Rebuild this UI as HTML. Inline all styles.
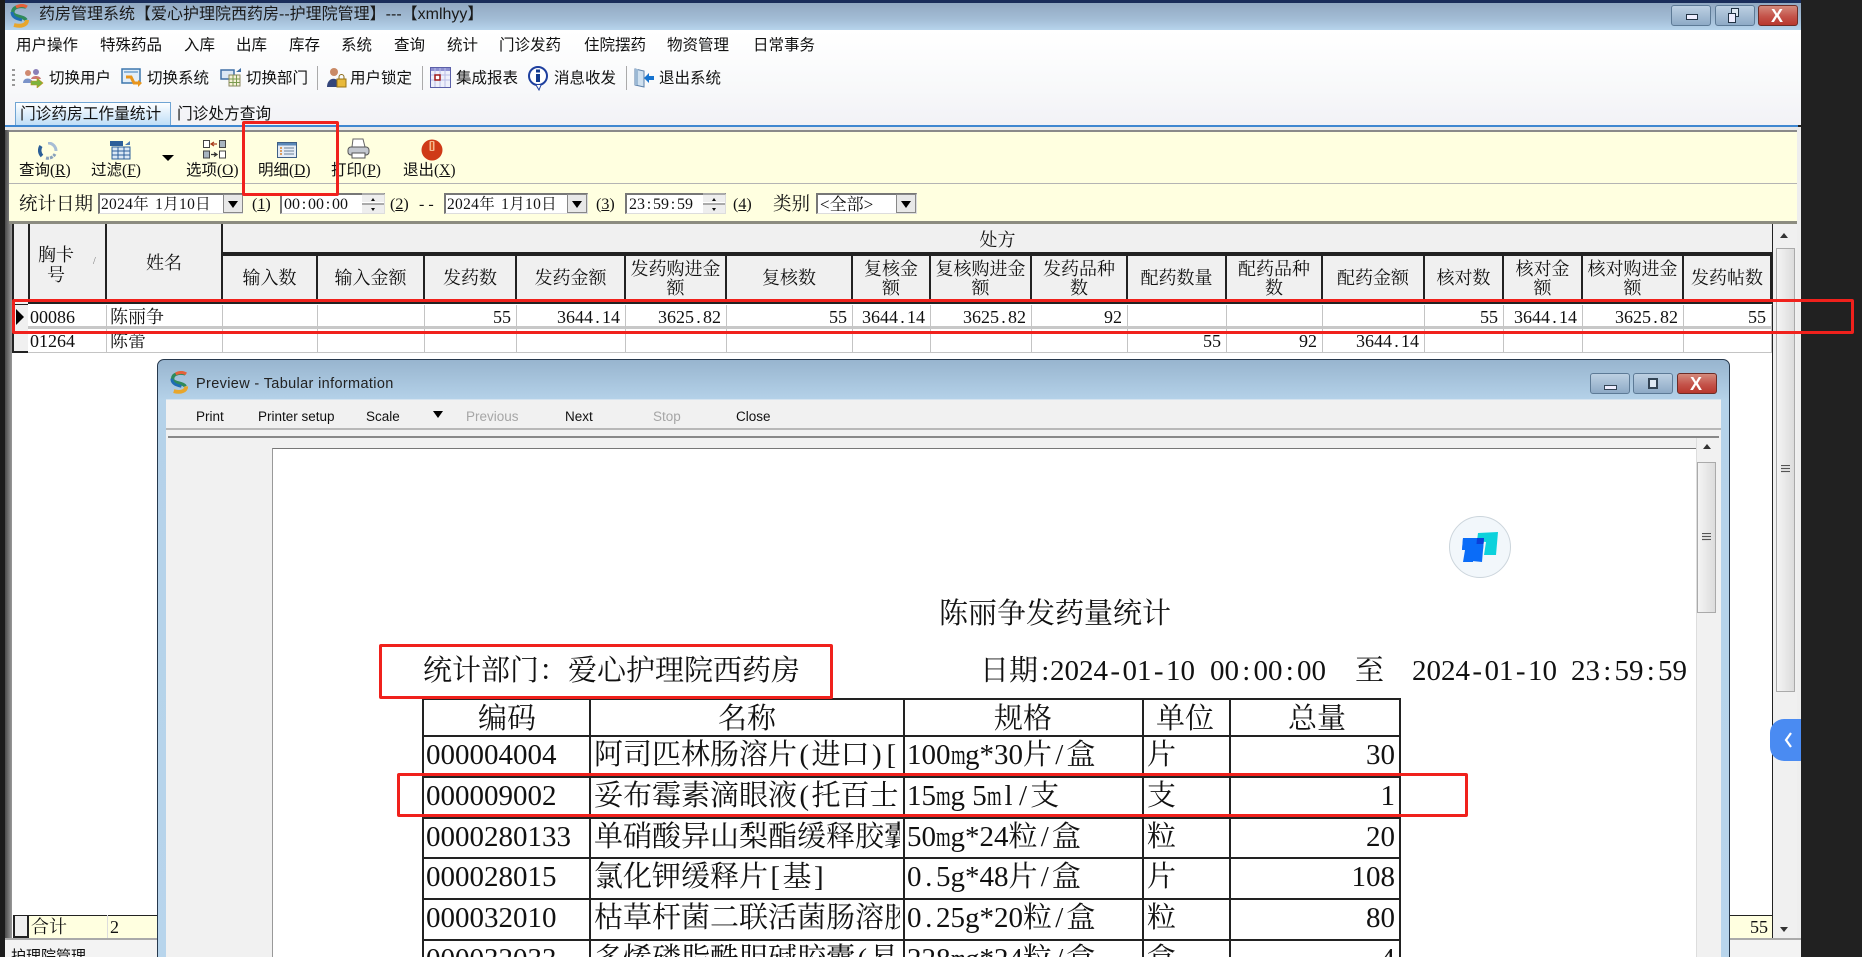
<!DOCTYPE html>
<html lang="zh-CN"><head><meta charset="utf-8"><title>药房管理系统</title>
<style>
*{box-sizing:border-box}
html,body{margin:0;padding:0;background:#212121}
#p{position:relative;width:1862px;height:957px;overflow:hidden;background:#212121;font-family:"Liberation Sans","Noto Sans CJK SC",sans-serif;color:#111;filter:blur(.3px)}
#p div,#p svg{position:absolute}
.t{white-space:nowrap;line-height:20px}
.m{font-size:15.5px;top:36px}
.b{font-size:15.5px;top:69px}
.l{font-size:15.5px;top:161px;font-family:"Liberation Serif","Noto Sans CJK SC",serif}
.d{font-size:16px;top:195px;font-family:"Liberation Serif","Noto Serif CJK SC",serif}
.gr{font-family:"Liberation Serif","Noto Serif CJK SC",serif;font-size:18px}
.h{top:254px;height:50px;background:#f0f0f0;border-right:2px solid #222;border-top:2px solid #222;border-bottom:3px solid #222;text-align:center;line-height:19px;overflow:hidden;display:flex;align-items:center;justify-content:center;white-space:nowrap;padding:0 1px}
.c{height:24px;border-right:1px solid #c4c4c4;border-bottom:1px solid #c4c4c4;text-align:right;padding-right:5px;line-height:24px;white-space:nowrap;overflow:hidden;background:#fff}
.r1{top:305px;border-bottom:3px solid #c8c8c8}
.r2{top:329px}
.rp{font-family:"Liberation Serif","Noto Serif CJK SC",serif;font-size:29px;line-height:36px;white-space:nowrap;color:#111}
.cell{overflow:hidden;white-space:nowrap}
.w{display:inline-block;width:14.5px;text-align:center}
.n{display:inline-block;width:14.5px;transform:scaleX(.65);transform-origin:left}
.p{display:inline-block;width:9px;text-align:center}
.q{display:inline-block;width:8px;text-align:center}
.red{border:3px solid #f0211c;border-radius:2px}
.win{width:40px;height:21px;border:1px solid #5d7a96;border-radius:3px;background:linear-gradient(#bdd0e2,#8eaac6)}
.sb{background:linear-gradient(90deg,#f4f4f4,#dcdcdc);border:1px solid #aaa}
.cb{background:#fff;border-top:2px solid #777;border-left:2px solid #777;border-right:1px solid #ddd;border-bottom:1px solid #ddd;height:21px;top:193px}
.dd{top:194px;height:19px;width:20px;background:#e8e8e8;border:1px solid #888}
.tri{width:0;height:0;border-left:5px solid transparent;border-right:5px solid transparent;border-top:7px solid #000}
.sp{width:22px;height:9px;background:#eee;border-top:2px solid #aaa}
.up,.dn{width:0;height:0;border-left:2px solid transparent;border-right:2px solid transparent}
.up{border-bottom:3px solid #111}.dn{border-top:3px solid #111}
</style></head><body><div id="p">

<!-- main window -->
<div style="left:0;top:0;width:1801px;height:3px;background:#1a2d5a"></div>
<div style="left:0;top:0;width:5px;height:957px;background:#1c1c1c"></div>
<div style="left:5px;top:30px;width:7px;height:927px;background:linear-gradient(90deg,#4a4a4a,#9a9a9a)"></div>
<div style="left:5px;top:3px;width:1796px;height:27px;background:linear-gradient(#92a9c2,#a3bdd6 60%,#b7d4ec)"></div>
<svg style="left:8px;top:4px" width="24" height="24" viewBox="0 0 24 24"><path d="M18 3C10 1 4 4 5 9c1 4 11 3 13 7" fill="none" stroke="#2f8a5a" stroke-width="3.5"/><path d="M6 21c7 2 13 0 13-5" fill="none" stroke="#e8a62c" stroke-width="4"/><path d="M4 8c0 6 6 7 10 8" fill="none" stroke="#1f6db4" stroke-width="3"/><path d="M8 3c4-2 8-2 11 0" fill="none" stroke="#e5613a" stroke-width="3"/></svg>
<div class="t" style="left:39px;top:5px;font-size:16px;color:#1a1a1a">药房管理系统【爱心护理院西药房--护理院管理】---【xmlhyy】</div>
<div class="win" style="left:1671px;top:5px"><div style="left:14px;top:8px;width:12px;height:6px;background:#eef;border:1px solid #234"></div></div>
<div class="win" style="left:1715px;top:5px"><div style="left:15px;top:2px;width:8px;height:9px;background:#dfe9f3;border:1px solid #234"></div><div style="left:12px;top:7px;width:8px;height:10px;background:#eef;border:1px solid #234"></div></div>
<div class="win" style="left:1758px;top:5px;background:linear-gradient(#d48a7c,#c4534a 55%,#b8382e);border-color:#6d2c26"><div class="t" style="left:12px;top:0;font-size:18px;font-weight:bold;color:#fff">X</div></div>

<div style="left:5px;top:30px;width:1796px;height:95px;background:linear-gradient(#fff,#f9fafb 50%,#f2f2f6)"></div>
<div class="t m" style="left:16px">用户操作</div><div class="t m" style="left:100px">特殊药品</div><div class="t m" style="left:184px">入库</div><div class="t m" style="left:236px">出库</div><div class="t m" style="left:289px">库存</div><div class="t m" style="left:341px">系统</div><div class="t m" style="left:394px">查询</div><div class="t m" style="left:447px">统计</div><div class="t m" style="left:499px">门诊发药</div><div class="t m" style="left:584px">住院摆药</div><div class="t m" style="left:667px">物资管理</div><div class="t m" style="left:753px">日常事务</div>

<div style="left:12px;top:69px;width:3px;height:19px;background:repeating-linear-gradient(#999 0 2px,transparent 2px 5px)"></div>
<svg style="left:22px;top:68px" width="22" height="20" viewBox="0 0 22 20"><circle cx="6" cy="5" r="3" fill="#d08a70"/><circle cx="14" cy="4" r="3" fill="#8a7fb8"/><path d="M1 15c0-6 9-6 10 0z" fill="#7a93c9"/><path d="M9 11c1-4 9-4 10 0z" fill="#c77"/><path d="M9 13h6v-3l6 5-6 5v-3H9z" fill="#7cb33d" stroke="#c8921c" stroke-width=".6"/></svg>
<div class="t b" style="left:49px">切换用户</div>
<svg style="left:121px;top:68px" width="22" height="20" viewBox="0 0 22 20"><rect x="1" y="1" width="18" height="14" fill="#e3eef8" stroke="#3d77ad" stroke-width="1.5"/><rect x="3" y="3" width="14" height="2" fill="#8bb4d8"/><path d="M5 9h5l3 6h5" fill="none" stroke="#e8951c" stroke-width="3"/><path d="M17 12l4 3-4 4z" fill="#e8951c"/></svg>
<div class="t b" style="left:147px">切换系统</div>
<svg style="left:220px;top:67px" width="23" height="20" viewBox="0 0 23 20"><rect x="1" y="3" width="13" height="9" fill="#dbe7f4" stroke="#3f6fa5" stroke-width="1.5"/><rect x="9" y="8" width="11" height="11" fill="#f6f0d8" stroke="#8b8760"/><path d="M9 12h11M9 15.500h11M13 8v11M16.500 8v11" stroke="#7a9a50"/><path d="M16 5l5-4v4z" fill="#3f6fa5"/></svg>
<div class="t b" style="left:246px">切换部门</div>
<div style="left:317px;top:66px;width:1px;height:24px;background:#aaa"></div>
<svg style="left:326px;top:67px" width="22" height="22" viewBox="0 0 22 22"><circle cx="8" cy="5" r="4" fill="#c98a66"/><path d="M1 20c0-11 13-11 13 0z" fill="#33457a"/><path d="M13 12v-2a2.500 2.500 0 0 1 5 0v2" fill="none" stroke="#8a6a1a"/><rect x="11" y="12" width="9" height="8" fill="#e8b93a" stroke="#9a7414"/></svg>
<div class="t b" style="left:350px">用户锁定</div>
<div style="left:422px;top:66px;width:1px;height:24px;background:#aaa"></div>
<svg style="left:430px;top:67px" width="21" height="21" viewBox="0 0 21 21"><rect x=".5" y=".5" width="20" height="20" fill="#eef0fb" stroke="#5a5fa8"/><rect x="1" y="1" width="19" height="3" fill="#8c8fd0"/><path d="M5 1v19M10 1v19M15 1v19M1 8h19M1 13h19" stroke="#b9bde6"/><rect x="5" y="8" width="5" height="5" fill="#fff" stroke="#a01818" stroke-width="1.5"/></svg>
<div class="t b" style="left:456px">集成报表</div>
<svg style="left:527px;top:66px" width="22" height="25" viewBox="0 0 22 25"><circle cx="11" cy="10" r="9" fill="#fff" stroke="#1e3f9e" stroke-width="2"/><rect x="9" y="8" width="4" height="8" fill="#123a8e"/><rect x="9" y="3.500" width="4" height="3" fill="#123a8e"/><path d="M9 19l3 5 2-5" fill="#fff" stroke="#1e3f9e"/></svg>
<div class="t b" style="left:554px">消息收发</div>
<div style="left:626px;top:66px;width:1px;height:24px;background:#aaa"></div>
<svg style="left:633px;top:67px" width="22" height="22" viewBox="0 0 22 22"><path d="M2 2l9 2v16l-9-2z" fill="#cfe0ef" stroke="#5b7fa8"/><rect x="2" y="2" width="3" height="16" fill="#9bb8d4"/><path d="M11 11l5-5v3h5v4h-5v3z" fill="#1673cf"/></svg>
<div class="t b" style="left:659px">退出系统</div>

<!-- tabs -->
<div style="left:15px;top:102px;width:156px;height:24px;background:linear-gradient(#fdfeff,#bcdcf6);border:1px solid #6fa4d3;border-bottom:none"></div>
<div class="t" style="left:20px;top:105px;font-size:15.7px">门诊药房工作量统计</div>
<div class="t" style="left:177px;top:105px;font-size:15.7px">门诊处方查询</div>
<div style="left:5px;top:125px;width:1793px;height:2px;background:#3f87d0"></div>
<div style="left:5px;top:127px;width:1796px;height:3px;background:#e8e8e8"></div>
<div style="left:9px;top:130px;width:1789px;height:2px;background:#8a8a8a"></div>

<!-- yellow panel -->
<div style="left:9px;top:132px;width:1788px;height:51px;background:#ffffe0"></div>
<div style="left:9px;top:183px;width:1788px;height:1px;background:#b4b4b4"></div>
<div style="left:9px;top:184px;width:1788px;height:37px;background:#ffffe0"></div>
<div style="left:1797px;top:130px;width:4px;height:100px;background:#eee"></div>
<div style="left:9px;top:221px;width:1788px;height:3px;background:#8c8c80"></div>

<svg style="left:38px;top:142px" width="20" height="18" viewBox="0 0 20 18"><path d="M10 1a8 8 0 0 1 8 8" fill="none" stroke="#a7bdd4" stroke-width="3"/><path d="M3 4a8 8 0 0 0 1 10" fill="none" stroke="#2b5f98" stroke-width="3.500"/><path d="M8 16a8 8 0 0 0 9-4" fill="none" stroke="#8aa2bb" stroke-width="3" stroke-dasharray="3 1"/></svg>
<svg style="left:109px;top:140px" width="22" height="20" viewBox="0 0 22 20"><rect x="1" y="1" width="13" height="5" fill="#2d5f9a"/><path d="M16 5l5-4v4z" fill="#4d7cb3"/><rect x="3" y="7" width="18" height="12" fill="#dbe8f5" stroke="#2d5f9a"/><path d="M3 11h18M3 15h18M9 7v12M15 7v12" stroke="#2d5f9a"/></svg>
<svg style="left:203px;top:140px" width="23" height="19" viewBox="0 0 23 19"><rect x=".5" y=".5" width="6" height="7" fill="#fff" stroke="#444"/><rect x="16.500" y=".5" width="6" height="7" fill="#a8b4c0" stroke="#444"/><path d="M14 4H9M11 2l-3 2 3 2" fill="none" stroke="#a83a1a" stroke-width="1.200"/><rect x=".5" y="11" width="6" height="7" fill="#a8b4c0" stroke="#444"/><rect x="16.500" y="11" width="6" height="7" fill="#fff" stroke="#444"/><path d="M8 14.500h5M11 12.500l3 2-3 2" fill="none" stroke="#333" stroke-width="1.200"/></svg>
<svg style="left:277px;top:142px" width="20" height="16" viewBox="0 0 20 16"><rect x=".5" y=".5" width="19" height="15" fill="#e6edf6" stroke="#3f5f85"/><rect x="1" y="1" width="18" height="2.500" fill="#5a88b8"/><path d="M3 6h2M3 9h2M3 12h2" stroke="#d9822b" stroke-width="1.500"/><path d="M7 6h10M7 9h10M7 12h10" stroke="#6a7f96"/></svg>
<svg style="left:347px;top:138px" width="23" height="21" viewBox="0 0 23 21"><path d="M6 1h10l2 8H5z" fill="#fff" stroke="#666"/><rect x="1" y="9" width="21" height="8" rx="3" fill="#c4c8cf" stroke="#555"/><rect x="5" y="15" width="13" height="5" fill="#fff" stroke="#555"/></svg>
<svg style="left:421px;top:139px" width="22" height="22" viewBox="0 0 22 22"><circle cx="11" cy="11" r="10.500" fill="#cf3a17"/><rect x="8.500" y="2" width="5" height="10" rx="1" fill="#f4b68f"/><rect x="10" y="3" width="2" height="8" fill="#d9551f"/></svg>
<div class="t l" style="left:19px">查询(<u>R</u>)</div>
<div class="t l" style="left:91px">过滤(<u>F</u>)</div>
<div style="left:162px;top:155px;width:0;height:0;border-left:6.5px solid transparent;border-right:6.5px solid transparent;border-top:6px solid #000"></div>
<div class="t l" style="left:186px">选项(<u>O</u>)</div>
<div class="t l" style="left:258px">明细(<u>D</u>)</div>
<div class="t l" style="left:331px">打印(<u>P</u>)</div>
<div class="t l" style="left:403px">退出(<u>X</u>)</div>

<!-- date row -->
<div class="t d" style="left:19px;font-size:18.5px">统计日期</div>
<div class="cb" style="left:98px;width:145px"></div>
<div class="t d" style="left:101px;font-size:15.5px;letter-spacing:.3px;word-spacing:2px">2024年 1月10日</div>
<div class="dd" style="left:223px"><div class="tri" style="left:4px;top:6px"></div></div>
<div class="t d" style="left:252px">(<u>1</u>)</div>
<div class="cb" style="left:280px;width:105px"></div>
<div class="t d" style="left:284px">00<span class="q">:</span>00<span class="q">:</span>00</div>
<div class="sp" style="left:362px;top:193px"><div class="up" style="left:9px;top:3px"></div></div><div class="sp" style="left:362px;top:203px;height:10px"><div class="dn" style="left:9px;top:3px"></div></div>
<div class="t d" style="left:390px">(<u>2</u>)</div>
<div class="t d" style="left:419px;letter-spacing:4px">--</div>
<div class="cb" style="left:444px;width:144px"></div>
<div class="t d" style="left:447px;font-size:15.5px;letter-spacing:.3px;word-spacing:2px">2024年 1月10日</div>
<div class="dd" style="left:567px"><div class="tri" style="left:4px;top:6px"></div></div>
<div class="t d" style="left:596px">(<u>3</u>)</div>
<div class="cb" style="left:625px;width:101px"></div>
<div class="t d" style="left:629px">23<span class="q">:</span>59<span class="q">:</span>59</div>
<div class="sp" style="left:703px;top:193px"><div class="up" style="left:9px;top:3px"></div></div><div class="sp" style="left:703px;top:203px;height:10px"><div class="dn" style="left:9px;top:3px"></div></div>
<div class="t d" style="left:733px">(<u>4</u>)</div>
<div class="t d" style="left:773px;font-size:18.5px">类别</div>
<div class="cb" style="left:816px;width:101px"></div>
<div class="t d" style="left:820px;font-size:17px">&lt;全部&gt;</div>
<div class="dd" style="left:896px"><div class="tri" style="left:4px;top:6px"></div></div>

<!-- grid -->
<div style="left:12px;top:224px;width:1786px;height:714px;background:#fff"></div>
<div style="left:1797px;top:224px;width:4px;height:733px;background:#eee"></div>
<div class="gr" style="left:0;top:0;width:1862px;height:957px">
<div style="left:12px;top:224px;width:16px;height:129px;background:#f0f0f0;border-left:2px solid #222;border-bottom:2px solid #222"></div>
<div style="left:12px;top:304px;width:16px;height:25px;background:#f0f0f0;border-left:2px solid #222;border-top:1px solid #222"></div>
<div style="left:16px;top:309px;width:0;height:0;border-top:8px solid transparent;border-bottom:8px solid transparent;border-left:8px solid #000"></div>
<div style="left:28px;top:224px;width:79px;height:80px;background:#f0f0f0;border-left:2px solid #222;border-right:2px solid #222;border-bottom:3px solid #222;text-align:center"><div style="left:4px;top:21px;width:44px;line-height:20px">胸卡号</div><div style="left:63px;top:32px;font-size:10px;color:#777">/</div></div>
<div style="left:107px;top:224px;width:116px;height:80px;background:#f0f0f0;border-right:2px solid #222;border-bottom:3px solid #222;text-align:center;line-height:78px;padding-bottom:22px">姓名</div>
<div style="left:223px;top:224px;width:1549px;height:30px;background:#f0f0f0;border-bottom:2px solid #222;text-align:center;line-height:32px">处方</div>
<div class="h" style="left:223px;width:95px">输入数</div><div class="h" style="left:318px;width:107px">输入金额</div><div class="h" style="left:425px;width:92px">发药数</div><div class="h" style="left:517px;width:109px">发药金额</div><div class="h" style="left:626px;width:101px">发药购进金<br>额</div><div class="h" style="left:727px;width:126px">复核数</div><div class="h" style="left:853px;width:78px">复核金<br>额</div><div class="h" style="left:931px;width:101px">复核购进金<br>额</div><div class="h" style="left:1032px;width:96px">发药品种<br>数</div><div class="h" style="left:1128px;width:99px">配药数量</div><div class="h" style="left:1227px;width:96px">配药品种<br>数</div><div class="h" style="left:1323px;width:102px">配药金额</div><div class="h" style="left:1425px;width:79px">核对数</div><div class="h" style="left:1504px;width:79px">核对金<br>额</div><div class="h" style="left:1583px;width:101px">核对购进金<br>额</div><div class="h" style="left:1684px;width:88px">发药帖数</div>

<div class="c r1" style="left:28px;width:79px;text-align:left;padding-left:2px">00086</div><div class="c r1" style="left:107px;width:116px;text-align:left;padding-left:3px">陈丽争</div><div class="c r1" style="left:223px;width:95px"></div><div class="c r1" style="left:318px;width:107px"></div><div class="c r1" style="left:425px;width:92px">55</div><div class="c r1" style="left:517px;width:109px">3644<span class="p">.</span>14</div><div class="c r1" style="left:626px;width:101px">3625<span class="p">.</span>82</div><div class="c r1" style="left:727px;width:126px">55</div><div class="c r1" style="left:853px;width:78px">3644<span class="p">.</span>14</div><div class="c r1" style="left:931px;width:101px">3625<span class="p">.</span>82</div><div class="c r1" style="left:1032px;width:96px">92</div><div class="c r1" style="left:1128px;width:99px"></div><div class="c r1" style="left:1227px;width:96px"></div><div class="c r1" style="left:1323px;width:102px"></div><div class="c r1" style="left:1425px;width:79px">55</div><div class="c r1" style="left:1504px;width:79px">3644<span class="p">.</span>14</div><div class="c r1" style="left:1583px;width:101px">3625<span class="p">.</span>82</div><div class="c r1" style="left:1684px;width:88px">55</div>

<div class="c r2" style="left:28px;width:79px;text-align:left;padding-left:2px">01264</div><div class="c r2" style="left:107px;width:116px;text-align:left;padding-left:3px">陈蕾</div><div class="c r2" style="left:223px;width:95px"></div><div class="c r2" style="left:318px;width:107px"></div><div class="c r2" style="left:425px;width:92px"></div><div class="c r2" style="left:517px;width:109px"></div><div class="c r2" style="left:626px;width:101px"></div><div class="c r2" style="left:727px;width:126px"></div><div class="c r2" style="left:853px;width:78px"></div><div class="c r2" style="left:931px;width:101px"></div><div class="c r2" style="left:1032px;width:96px"></div><div class="c r2" style="left:1128px;width:99px">55</div><div class="c r2" style="left:1227px;width:96px">92</div><div class="c r2" style="left:1323px;width:102px">3644<span class="p">.</span>14</div><div class="c r2" style="left:1425px;width:79px"></div><div class="c r2" style="left:1504px;width:79px"></div><div class="c r2" style="left:1583px;width:101px"></div><div class="c r2" style="left:1684px;width:88px"></div>

<!-- footer -->
<div style="left:13px;top:915px;width:16px;height:23px;background:#f0f0f0;border:2px solid #222;border-top:1px solid #222"></div>
<div style="left:29px;top:915px;width:1743px;height:23px;background:#ffffe0;border-top:1px solid #222"></div>
<div style="left:107px;top:915px;width:1px;height:23px;background:#ddd"></div>
<div class="t" style="left:31px;top:917px">合计</div><div class="t" style="left:110px;top:917px">2</div>
<div class="t" style="left:1750px;top:917px">55</div>
</div>
<div style="left:5px;top:938px;width:1796px;height:19px;background:#f3f3f3;border-top:2px solid #aaa"></div>
<div class="t" style="left:11px;top:947px;font-size:15px">护理院管理</div>

<!-- main scrollbar -->
<div style="left:1772px;top:224px;width:25px;height:714px;background:#f0f0f0;border-left:1px solid #222"></div>
<div class="tri" style="left:1780px;top:233px;transform:rotate(180deg);border-left-width:4px;border-right-width:4px;border-top-width:5px;border-top-color:#333"></div>
<div class="sb" style="left:1776px;top:248px;width:19px;height:444px"></div>
<div style="left:1781px;top:465px;width:9px;height:8px;background:repeating-linear-gradient(#555 0 1px,#ddd 1px 3px)"></div>
<div class="tri" style="left:1780px;top:927px;border-left-width:4px;border-right-width:4px;border-top-width:5px;border-top-color:#333"></div>

<!-- preview -->
<div style="left:157px;top:359px;width:1573px;height:620px;background:linear-gradient(#98b5cf 0,#b5d2e9 40px,#b8d5ec 100%);border:1px solid #26384c;border-radius:7px 7px 0 0"></div>
<svg style="left:168px;top:371px" width="23" height="23" viewBox="0 0 24 24"><path d="M18 3C10 1 4 4 5 9c1 4 11 3 13 7" fill="none" stroke="#2f8a5a" stroke-width="3.500"/><path d="M6 21c7 2 13 0 13-5" fill="none" stroke="#e8a62c" stroke-width="4"/><path d="M4 8c0 6 6 7 10 8" fill="none" stroke="#1f6db4" stroke-width="3"/><path d="M8 3c4-2 8-2 11 0" fill="none" stroke="#e5613a" stroke-width="3"/></svg>
<div class="t" style="left:196px;top:374px;font-size:14.5px;letter-spacing:.35px;color:#222">Preview - Tabular information</div>
<div class="win" style="left:1590px;top:373px"><div style="left:13px;top:11px;width:13px;height:5px;background:#eef;border:1px solid #345"></div></div>
<div class="win" style="left:1633px;top:373px"><div style="left:14px;top:4px;width:10px;height:11px;background:#dfe9f3;border:2px solid #345"></div></div>
<div class="win" style="left:1677px;top:373px;background:linear-gradient(#d48a7c,#c4534a 55%,#b8382e);border-color:#6d2c26"><div class="t" style="left:12px;top:0;font-size:18px;font-weight:bold;color:#fff">X</div></div>
<div style="left:166px;top:399px;width:1555px;height:558px;background:#f1f1f1;border-top:1px solid #d6e4f0"></div>
<div style="left:166px;top:428px;width:1555px;height:2px;background:#b8b8b8"></div>
<div style="left:168px;top:436px;width:1551px;height:2px;background:#888"></div>
<div class="t" style="left:196px;top:407px;font-size:13.5px">Print</div>
<div class="t" style="left:258px;top:407px;font-size:13.5px">Printer setup</div>
<div class="t" style="left:366px;top:407px;font-size:13.5px">Scale</div>
<div class="tri" style="left:433px;top:411px"></div>
<div class="t" style="left:466px;top:407px;font-size:13.5px;color:#a6a6a6">Previous</div>
<div class="t" style="left:565px;top:407px;font-size:13.5px">Next</div>
<div class="t" style="left:653px;top:407px;font-size:13.5px;color:#a6a6a6">Stop</div>
<div class="t" style="left:736px;top:407px;font-size:13.5px">Close</div>

<!-- page -->
<div style="left:272px;top:448px;width:1424px;height:509px;background:#fff;border-left:1px solid #999;border-top:1px solid #777"></div>
<div style="left:1696px;top:438px;width:22px;height:519px;background:#f1f1f1;border-left:1px solid #ddd"></div>
<div class="tri" style="left:1703px;top:444px;transform:rotate(180deg);border-left-width:4px;border-right-width:4px;border-top-width:5px;border-top-color:#333"></div>
<div class="sb" style="left:1697px;top:462px;width:19px;height:151px"></div>
<div style="left:1702px;top:533px;width:9px;height:8px;background:repeating-linear-gradient(#555 0 1px,#ddd 1px 3px)"></div>

<div class="rp" style="left:939px;top:596px">陈丽争发药量统计</div>
<div class="rp" style="left:423px;top:653px">统计部门：爱心护理院西药房</div>
<div class="rp" style="left:980px;top:653px">日期<span class="w">:</span></div>
<div class="rp" style="left:1050px;top:653px">2024<span class="w">-</span>01<span class="w">-</span>10</div>
<div class="rp" style="left:1210px;top:653px">00<span class="w">:</span>00<span class="w">:</span>00</div>
<div class="rp" style="left:1355px;top:653px">至</div>
<div class="rp" style="left:1412px;top:653px">2024<span class="w">-</span>01<span class="w">-</span>10</div>
<div class="rp" style="left:1571px;top:653px">23<span class="w">:</span>59<span class="w">:</span>59</div>

<!-- table lines -->
<div style="left:422px;top:698px;width:977px;height:2px;background:#222"></div>
<div style="left:422px;top:735px;width:977px;height:2px;background:#222"></div>
<div style="left:422px;top:776px;width:977px;height:2px;background:#222"></div>
<div style="left:422px;top:817px;width:977px;height:2px;background:#222"></div>
<div style="left:422px;top:857px;width:977px;height:2px;background:#222"></div>
<div style="left:422px;top:898px;width:977px;height:2px;background:#222"></div>
<div style="left:422px;top:939px;width:977px;height:2px;background:#222"></div>
<div style="left:422px;top:698px;width:1.5px;height:259px;background:#222"></div>
<div style="left:589px;top:698px;width:1.5px;height:259px;background:#222"></div>
<div style="left:903px;top:698px;width:1.5px;height:259px;background:#222"></div>
<div style="left:1142px;top:698px;width:1.5px;height:259px;background:#222"></div>
<div style="left:1229px;top:698px;width:1.5px;height:259px;background:#222"></div>
<div style="left:1399px;top:698px;width:1.5px;height:259px;background:#222"></div>

<div class="rp" style="left:478px;top:701px">编码</div><div class="rp" style="left:718px;top:701px">名称</div><div class="rp" style="left:994px;top:701px">规格</div><div class="rp" style="left:1156px;top:701px">单位</div><div class="rp" style="left:1288px;top:701px">总量</div>

<div class="rp" style="left:426px;top:737px">000004004</div><div class="rp cell" style="left:594px;top:737px;width:309px">阿司匹林肠溶片<span class="w">(</span>进口<span class="w">)</span><span class="w">[</span></div><div class="rp cell" style="left:907px;top:737px;width:235px">100<span class="n">m</span>g*30片<span class="w">/</span>盒</div><div class="rp" style="left:1147px;top:737px">片</div><div class="rp" style="left:1231px;top:737px;width:164px;text-align:right">30</div>
<div class="rp" style="left:426px;top:778px">000009002</div><div class="rp cell" style="left:594px;top:778px;width:309px">妥布霉素滴眼液<span class="w">(</span>托百士</div><div class="rp cell" style="left:907px;top:778px;width:235px">15<span class="n">m</span>g 5<span class="n">m</span><span class="w">l</span><span class="w">/</span>支</div><div class="rp" style="left:1147px;top:778px">支</div><div class="rp" style="left:1231px;top:778px;width:164px;text-align:right">1</div>
<div class="rp" style="left:426px;top:819px">0000280133</div><div class="rp cell" style="left:594px;top:819px;width:306px">单硝酸异山梨酯缓释胶囊</div><div class="rp cell" style="left:907px;top:819px;width:235px">50<span class="n">m</span>g*24粒<span class="w">/</span>盒</div><div class="rp" style="left:1147px;top:819px">粒</div><div class="rp" style="left:1231px;top:819px;width:164px;text-align:right">20</div>
<div class="rp" style="left:426px;top:859px">000028015</div><div class="rp cell" style="left:594px;top:859px;width:309px">氯化钾缓释片<span class="w">[</span>基<span class="w">]</span></div><div class="rp cell" style="left:907px;top:859px;width:235px">0<span class="w">.</span>5g*48片<span class="w">/</span>盒</div><div class="rp" style="left:1147px;top:859px">片</div><div class="rp" style="left:1231px;top:859px;width:164px;text-align:right">108</div>
<div class="rp" style="left:426px;top:900px">000032010</div><div class="rp cell" style="left:594px;top:900px;width:306px">枯草杆菌二联活菌肠溶胶</div><div class="rp cell" style="left:907px;top:900px;width:235px">0<span class="w">.</span>25g*20粒<span class="w">/</span>盒</div><div class="rp" style="left:1147px;top:900px">粒</div><div class="rp" style="left:1231px;top:900px;width:164px;text-align:right">80</div>
<div class="rp" style="left:426px;top:941px">000032033</div><div class="rp cell" style="left:594px;top:941px;width:306px">多烯磷脂酰胆碱胶囊<span class="w">(</span>易</div><div class="rp cell" style="left:907px;top:941px;width:235px">228<span class="n">m</span>g*24粒<span class="w">/</span>盒</div><div class="rp" style="left:1147px;top:941px">盒</div><div class="rp" style="left:1231px;top:941px;width:164px;text-align:right">4</div>

<!-- floating logo -->
<div style="left:1449px;top:516px;width:62px;height:62px;border-radius:50%;background:#f2f7fb;border:1px solid #ccd5dc"></div>
<svg style="left:1460px;top:530px" width="40" height="34" viewBox="0 0 40 34"><path d="M18 3L38 2l-2 23-12 0 2-13-9-1z" fill="#0cd2dc"/><path d="M3 8h21l-1 12h-9l-1 12-10 0 2-12-3 0z" fill="#0a6cf8" transform="translate(0,0)"/><path d="M3 8h21l-1 12H2z" fill="#0a6cf8"/><path d="M12 20h11l-1 12-10-1z" fill="#0a6cf8"/><path d="M17 8h7l-.5 6h-7z" fill="#0b3fd8"/></svg>

<!-- blue side tab -->
<div style="left:1770px;top:719px;width:31px;height:42px;background:#4a8bf2;border-radius:14px 0 0 14px"></div>
<svg style="left:1783px;top:731px" width="10" height="18" viewBox="0 0 10 18"><path d="M8 2L3 9l5 7" fill="none" stroke="#fff" stroke-width="2.200"/></svg>

<!-- red annotations -->
<div class="red" style="left:242px;top:121px;width:97px;height:75px"></div>
<div class="red" style="left:12px;top:299px;width:1842px;height:35px"></div>
<div class="red" style="left:379px;top:644px;width:454px;height:55px"></div>
<div class="red" style="left:397px;top:773px;width:1071px;height:44px"></div>
</div></body></html>
